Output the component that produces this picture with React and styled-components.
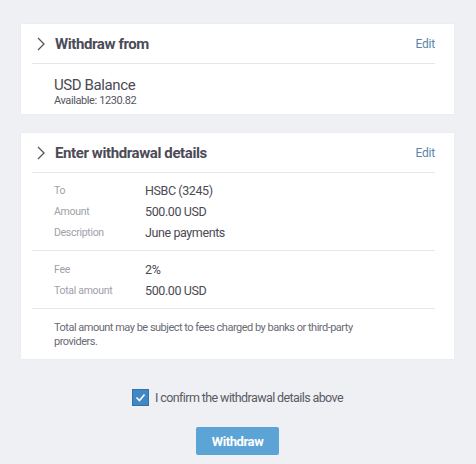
import React from "react";
import styled, { createGlobalStyle } from "styled-components";

const Global = createGlobalStyle`
  body {
    margin: 0;
    background: #eff0f4;
    font-family: Roboto, "Liberation Sans", sans-serif;
    color: #4a4a54;
  }
`;

const Page = styled.div`
  padding: 24px 22px 0 21px;
  display: flex;
  flex-direction: column;
`;

const Card = styled.div`
  background: #fff;
  padding: 0 19px 0 11px;
  margin-bottom: 19px;
  box-shadow: 0 0 2px rgba(0, 0, 0, 0.04);
`;

const Header = styled.div`
  box-sizing: border-box;
  height: 40px;
  display: flex;
  align-items: center;
  border-bottom: 1px solid #e6e7ea;
  padding: 1px 0 0 4px;
`;

const Chevron = styled.svg`
  width: 10px;
  height: 14px;
  margin-right: 9px;
`;

const Title = styled.div`
  flex: 1;
  font-size: 15px;
  font-weight: 700;
  letter-spacing: -0.4px;
  color: #4b4b57;
`;

const Edit = styled.a`
  font-size: 12px;
  color: #5b86ab;
  letter-spacing: -0.2px;
`;

const Balance = styled.div`
  padding: 12px 0 6px 22px;
`;

const BalanceName = styled.div`
  font-size: 15px;
  line-height: 18px;
  letter-spacing: -0.4px;
  color: #4a4a54;
`;

const Available = styled.div`
  font-size: 11px;
  line-height: 14px;
  letter-spacing: -0.4px;
  color: #55555f;
`;

const Section = styled.div`
  padding: ${(p) => p.$pad};
  padding-left: 22px;
  border-bottom: ${(p) => (p.$last ? "none" : "1px solid #e6e7ea")};
`;

const Row = styled.div`
  display: flex;
  align-items: center;
  height: 21px;
`;

const Label = styled.div`
  width: 91px;
  font-size: 10.5px;
  color: #a0a0a8;
  letter-spacing: -0.3px;
`;

const Value = styled.div`
  font-size: 12.5px;
  color: #4a4a54;
  letter-spacing: -0.4px;
`;

const Note = styled.div`
  max-width: 300px;
  font-size: 11px;
  line-height: 14px;
  color: #6a6a74;
  letter-spacing: -0.5px;
`;

const Confirm = styled.label`
  display: flex;
  align-items: center;
  justify-content: center;
  gap: 6px;
  margin-top: 11px;
  font-size: 12.5px;
  color: #5a5a64;
  letter-spacing: -0.6px;
`;

const Box = styled.span`
  width: 15px;
  height: 15px;
  background: #3f88c6;
  border: 1px solid #3a6f9f;
  display: flex;
  align-items: center;
  justify-content: center;
`;

const Button = styled.button`
  align-self: center;
  margin-top: 21px;
  width: 83px;
  height: 28px;
  border: none;
  border-radius: 2px;
  background: #5ba4d5;
  color: #fff;
  font-family: Roboto, "Liberation Sans", sans-serif;
  font-weight: 700;
  font-size: 13px;
  letter-spacing: -0.4px;
`;

function ChevronIcon() {
  return (
    <Chevron viewBox="0 0 10 14">
      <path d="M2 1l6 6-6 6" fill="none" stroke="#555560" strokeWidth="1.3" />
    </Chevron>
  );
}

export default function App() {
  return (
    <>
      <Global />
      <Page>
        <Card>
          <Header>
            <ChevronIcon />
            <Title>Withdraw from</Title>
            <Edit>Edit</Edit>
          </Header>
          <Balance>
            <BalanceName>USD Balance</BalanceName>
            <Available>Available: 1230.82</Available>
          </Balance>
        </Card>
        <Card>
          <Header>
            <ChevronIcon />
            <Title>Enter withdrawal details</Title>
            <Edit>Edit</Edit>
          </Header>
          <Section $pad="7px 0 7px">
            <Row>
              <Label>To</Label>
              <Value>HSBC (3245)</Value>
            </Row>
            <Row>
              <Label>Amount</Label>
              <Value>500.00 USD</Value>
            </Row>
            <Row>
              <Label>Description</Label>
              <Value>June payments</Value>
            </Row>
          </Section>
          <Section $pad="8px 0 7px">
            <Row>
              <Label>Fee</Label>
              <Value>2%</Value>
            </Row>
            <Row>
              <Label>Total amount</Label>
              <Value>500.00 USD</Value>
            </Row>
          </Section>
          <Section $pad="12px 0 10px" $last>
            <Note>
              Total amount may be subject to fees charged by banks or
              third-party providers.
            </Note>
          </Section>
        </Card>
        <Confirm>
          <Box>
            <svg width="11" height="11" viewBox="0 0 11 11">
              <path d="M1.5 5.5l3 3 5-6" fill="none" stroke="#fff" strokeWidth="1.6" />
            </svg>
          </Box>
          I confirm the withdrawal details above
        </Confirm>
        <Button>Withdraw</Button>
      </Page>
    </>
  );
}
